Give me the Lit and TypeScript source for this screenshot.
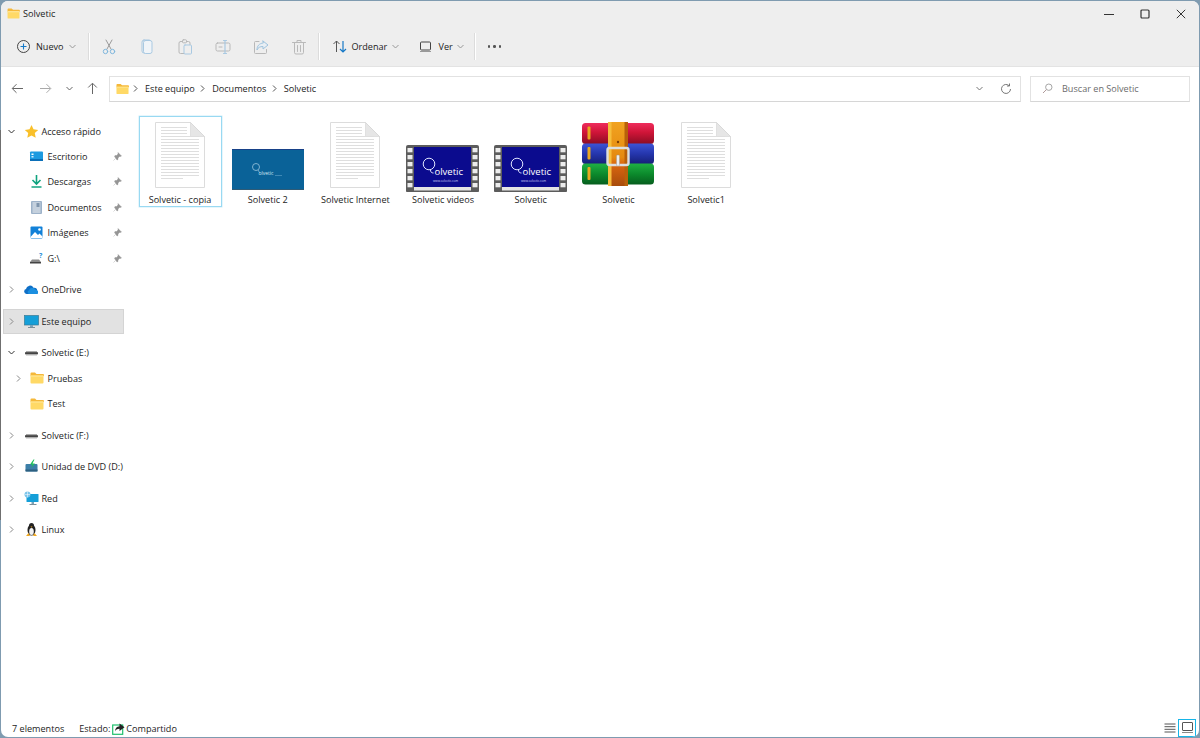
import { LitElement, html, css, svg } from "lit";
import { customElement } from "lit/decorators.js";

const chev = (d: "r" | "d", c = "#777") => html`<svg class="chev" width="9" height="9" viewBox="0 0 9 9"><path d="${d === "r" ? "M3 1.500l3 3-3 3" : "M1.500 3l3 3 3-3"}" fill="none" stroke="${c}" stroke-width="1"/></svg>`;

const folder = (w = 14, h = 12) => html`<svg width="${w}" height="${h}" viewBox="0 0 14 12"><path d="M0.5 1.5a1 1 0 0 1 1-1h3.5l1.5 1.5h6.500a1 1 0 0 1 1 1v1H.5z" fill="#f5b83a"/><path d="M.5 3.500h13v7a1 1 0 0 1-1 1h-11a1 1 0 0 1-1-1z" fill="#ffd966"/><path d="M.5 3.500h13v1h-13z" fill="#ffe9a0"/></svg>`;

const side = (p: unknown) => html`<svg width="15" height="15" viewBox="0 0 15 15">${p}</svg>`;
const drive = side(svg`<rect x="1" y="7" width="13" height="2.500" rx="1" fill="#444"/><rect x="2" y="6" width="11" height="1.200" fill="#aaa"/><rect x="2" y="9.500" width="11" height="1" fill="#bbb"/>`);
const icons: Record<string, unknown> = {
  star: side(svg`<path d="M7.500 1l2 4.300 4.700.6-3.400 3.200.9 4.600-4.200-2.300-4.200 2.300.9-4.600L.8 5.900l4.700-.6z" fill="#f9c02b"/>`),
  desk: side(svg`<rect x="1" y="2.500" width="13" height="9.500" rx="1" fill="#1d9ae0"/><rect x="1" y="10" width="13" height="2" fill="#0b6fb8"/><rect x="2.500" y="4.500" width="2" height="1.500" fill="#fff"/><rect x="2.500" y="7" width="2" height="1.500" fill="#cfeaff"/>`),
  down: side(svg`<path d="M7.500 1v8M3.500 6l4 4 4-4" fill="none" stroke="#10a37f" stroke-width="1.600"/><path d="M2.500 13h10" stroke="#10a37f" stroke-width="1.400"/>`),
  docs: side(svg`<rect x="2" y="1" width="11" height="13" rx="1" fill="#9db2c9"/><rect x="3.500" y="2" width="8" height="11" fill="#c4d0dd"/><rect x="7.500" y="3" width="3" height="4" fill="#7f95ad"/>`),
  pics: side(svg`<rect x="1.500" y="1.500" width="12" height="12" rx="1" fill="#1281d8"/><path d="M1.500 12l4.500-5 3 3 1.500-1.500 3 3v1.500h-12z" fill="#fff"/><circle cx="10.500" cy="4.500" r="1.300" fill="#fff"/>`),
  g: side(svg`<path d="M1 11l2-2.500h7l2 2.500z" fill="#8a8a8a"/><rect x="1" y="11" width="11" height="1.500" fill="#444"/><text x="10" y="7" font-size="7" font-family="Open Sans" font-weight="700" fill="#2a8fd8">?</text>`),
  cloud: side(svg`<path d="M2.500 12a2.500 2.500 0 0 1-.5-4.900 4 4 0 0 1 7.500-1.400 3.300 3.300 0 0 1 3.800 3A2 2 0 0 1 13 12z" fill="#0f6fc6"/><path d="M5 12a2 2 0 0 1 0-3.800 3.500 3.500 0 0 1 6.500-.5 2.500 2.500 0 0 1 1.800 4.300z" fill="#1b8fe0"/>`),
  pc: side(svg`<rect x="0.500" y="1.500" width="14" height="9.500" rx=".5" fill="#159fd8"/><rect x="0.500" y="1.500" width="14" height="9.500" fill="none" stroke="#3a7a94" stroke-width=".7"/><rect x="6" y="11" width="3" height="2" fill="#7ba3b8"/><rect x="4" y="13" width="7" height="1" fill="#7d8f99"/>`),
  dvd: side(svg`<rect x="1.500" y="5" width="12" height="7.500" rx="1" fill="#3d7fa8"/><rect x="1.500" y="10.500" width="12" height="2" fill="#2d5f80"/><path d="M9.500 .5L6 5.500h2.500L7 9l4-4.500H8.500L10.500 .5z" fill="#1fc25a"/>`),
  net: side(svg`<rect x="2.500" y="3" width="12" height="8" rx=".5" fill="#159fd8"/><rect x="7.500" y="11" width="2.500" height="2" fill="#7ba3b8"/><rect x="5.500" y="13" width="7" height="1" fill="#7d8f99"/><circle cx="3.500" cy="3.500" r="3" fill="#7cc4ea"/><path d="M1 3.500h5M3.500 .5v6" stroke="#fff" stroke-width=".5"/>`),
  linux: side(svg`<ellipse cx="7.500" cy="8" rx="4" ry="5.500" fill="#222"/><circle cx="7.500" cy="3.500" r="2.500" fill="#222"/><ellipse cx="7.500" cy="9.500" rx="2.300" ry="3.500" fill="#f2f2f2"/><path d="M6.500 4.500h2l-1 1.200z" fill="#f0a820"/><path d="M2 14l2.500-3 1.500 3zM13 14l-2.500-3L9 14z" fill="#f0a820"/>`),
  folder: folder(14, 12),
};

const pin = html`<svg class="pin" width="9" height="9" viewBox="0 0 9 9"><path d="M5 .5l3.500 3.500-1 .5-1 0-1.500 1.500 0 1.500-1 .5L1.500 4.500l.5-1 1.500 0L5 2l0-1z M2.500 6.500L.5 8.500" fill="#959595" stroke="#959595" stroke-width=".4"/></svg>`;

interface Row { t: string; ic: string; arrow?: "r" | "d"; lvl: 0 | 1; pin?: boolean; gap?: boolean; sel?: boolean }
const rows: Row[] = [
  { t: "Acceso rápido", ic: "star", arrow: "d", lvl: 0 },
  { t: "Escritorio", ic: "desk", lvl: 1, pin: true },
  { t: "Descargas", ic: "down", lvl: 1, pin: true },
  { t: "Documentos", ic: "docs", lvl: 1, pin: true },
  { t: "Imágenes", ic: "pics", lvl: 1, pin: true },
  { t: "G:\\", ic: "g", lvl: 1, pin: true },
  { t: "OneDrive", ic: "cloud", arrow: "r", lvl: 0, gap: true },
  { t: "Este equipo", ic: "pc", arrow: "r", lvl: 0, gap: true, sel: true },
  { t: "Solvetic (E:)", ic: "drive", arrow: "d", lvl: 0, gap: true },
  { t: "Pruebas", ic: "folder", arrow: "r", lvl: 1 },
  { t: "Test", ic: "folder", lvl: 1 },
  { t: "Solvetic (F:)", ic: "drive", arrow: "r", lvl: 0, gap: true },
  { t: "Unidad de DVD (D:)", ic: "dvd", arrow: "r", lvl: 0, gap: true },
  { t: "Red", ic: "net", arrow: "r", lvl: 0, gap: true },
  { t: "Linux", ic: "linux", arrow: "r", lvl: 0, gap: true },
];
icons.drive = drive;

const docLines = Array.from({ length: 18 }, (_, i) => svg`<rect x="6" y="${5 + i * 3}" width="${i < 3 ? 26 : i === 17 ? 22 : 38}" height="1" fill="#dedede"/>`);
const docIcon = html`<svg class="big" width="72" height="72" viewBox="-11 -2 72 72"><path d="M.5 .5h35l14 14v51H.5z" fill="#fff" stroke="#dcdcdc"/><path d="M35.500 .5l14 14h-14z" fill="#e6e6e6" stroke="#d4d4d4" stroke-width=".6"/>${docLines}</svg>`;

const picIcon = html`<svg class="big" width="72" height="72" viewBox="0 0 72 72"><rect x="0" y="29" width="72" height="41" fill="#0a6298"/><rect x="0" y="29" width="72" height=".8" fill="#1b3a85"/><rect x="0" y="69.500" width="72" height=".5" fill="#555"/><circle cx="24" cy="47" r="3.500" fill="none" stroke="#9cc6de" stroke-width=".8"/><path d="M26 50l1.500 2.500" stroke="#9cc6de" stroke-width=".7"/><text x="26.500" y="55" font-size="5" font-family="Open Sans" fill="#d4e8f3">olvetic</text><path d="M43 55.500h7" stroke="#4d93bd" stroke-width=".8"/></svg>`;

const holes = [0, 1, 2, 3, 4, 5];
const videoIcon = html`<svg class="big" width="74" height="72" viewBox="0 0 74 72">
  <rect x="0" y="25" width="73" height="47.500" rx="2" fill="#5c5c5c"/>
  ${holes.map((i) => svg`<rect x="1.500" y="${28 + i * 7}" width="5" height="4.300" fill="#ececec"/><rect x="66.500" y="${28 + i * 7}" width="5" height="4.300" fill="#ececec"/>`)}
  <rect x="8" y="27" width="57" height="40" fill="#0b0b8e"/>
  <rect x="8" y="67" width="57" height="3.500" fill="#e4e4e4"/>
  <circle cx="23" cy="44" r="5.800" fill="none" stroke="#dfe4ff" stroke-width="1"/>
  <path d="M24.500 50c0 2 1 3 3 3" fill="none" stroke="#dfe4ff" stroke-width="1"/>
  <text x="28.500" y="55" font-size="9.500" font-family="Open Sans" fill="#fff">olvetic</text>
  <text x="27" y="61.500" font-size="3" font-family="Open Sans" fill="#cfd0f5">www.solvetic.com</text>
</svg>`;

const book = (y: number, h: number, g: string) => svg`
  <rect x="0" y="${y}" width="72" height="${h}" rx="3.500" fill="url(#${g})"/>
  <rect x="5.500" y="${y + 3.500}" width="3" height="${h - 8}" rx="1" fill="#e9a820"/>`;
const rarIcon = html`<svg class="big" width="72" height="72" viewBox="0 0 72 72">
  <defs>
    <linearGradient id="gr" x1="0" y1="0" x2="0" y2="1"><stop offset="0" stop-color="#ef2c5c"/><stop offset=".45" stop-color="#cf1538"/><stop offset="1" stop-color="#8c0d24"/></linearGradient>
    <linearGradient id="gb" x1="0" y1="0" x2="0" y2="1"><stop offset="0" stop-color="#3d54d6"/><stop offset=".5" stop-color="#2536ad"/><stop offset="1" stop-color="#161f78"/></linearGradient>
    <linearGradient id="gg" x1="0" y1="0" x2="0" y2="1"><stop offset="0" stop-color="#1fb044"/><stop offset=".5" stop-color="#0c8a2c"/><stop offset="1" stop-color="#065e1e"/></linearGradient>
    <linearGradient id="gt" x1="0" y1="0" x2="0" y2="1"><stop offset="0" stop-color="#f1a320"/><stop offset=".55" stop-color="#e58a10"/><stop offset=".66" stop-color="#d9660f"/><stop offset="1" stop-color="#a84c0c"/></linearGradient>
  </defs>
  ${book(3, 21, "gr")}
  ${book(23.500, 20.500, "gb")}
  ${book(43.500, 21, "gg")}
  <path d="M26 2h20v64H26z" fill="url(#gt)"/>
  <path d="M26 2h3.500v64H26z" fill="#f6bd3c"/>
  <path d="M42.500 2H46v64h-3.500z" fill="#b8610a"/>
  <rect x="25.500" y="28" width="21" height="17" rx="2" fill="none" stroke="#dcdedf" stroke-width="2.400"/>
  <rect x="34.500" y="35" width="3" height="11" rx="1" fill="#eceded" stroke="#8d8d8d" stroke-width=".4"/>
  <circle cx="36" cy="22" r="1.200" fill="#7a3c05"/>
</svg>`;

const files = [
  { t: "Solvetic - copia", i: docIcon, sel: true },
  { t: "Solvetic 2", i: picIcon },
  { t: "Solvetic Internet", i: docIcon },
  { t: "Solvetic videos", i: videoIcon },
  { t: "Solvetic", i: videoIcon },
  { t: "Solvetic", i: rarIcon },
  { t: "Solvetic1", i: docIcon },
];

const tb = (p: unknown) => html`<svg width="18" height="18" viewBox="0 0 18 18" fill="none" stroke-linecap="round" stroke-linejoin="round">${p}</svg>`;
const tools = [
  tb(svg`<path d="M6 2l5 9M12 2L7 11" stroke="#9a9a9a"/><circle cx="5.500" cy="13.500" r="2.200" stroke="#7fb6dc"/><circle cx="12.500" cy="13.500" r="2.200" stroke="#7fb6dc"/>`),
  tb(svg`<rect x="4" y="2" width="9" height="13" rx="2" stroke="#a9c9e2"/><rect x="5.500" y="2.500" width="8.500" height="13" rx="2" stroke="#a9c9e2" fill="#f0f4f8"/>`),
  tb(svg`<rect x="3" y="3.500" width="11" height="12" rx="1.500" stroke="#b8b8b8"/><rect x="6.500" y="1.800" width="4" height="3" rx=".8" stroke="#b8b8b8" fill="#eee"/><rect x="8" y="7" width="7.500" height="9" rx="1" stroke="#a9c9e2" fill="#eee"/>`),
  tb(svg`<rect x="2" y="5" width="14" height="8" rx="1.500" stroke="#b8b8b8"/><path d="M5 9h3" stroke="#b8b8b8"/><path d="M11 2.500v13M9.500 2.500h3M9.500 15.500h3" stroke="#a9c9e2" stroke-width="1.200"/>`),
  tb(svg`<path d="M7 3.500H3.500a1 1 0 0 0-1 1v10a1 1 0 0 0 1 1h10a1 1 0 0 0 1-1v-3" stroke="#b8b8b8"/><path d="M11 3l5 4-5 4V8.500c-3 0-5 1-6 3.500 0-4 2-6.500 6-7z" stroke="#9fc3de" fill="#e9eff4"/>`),
  tb(svg`<path d="M4.500 4.500v10a1.500 1.500 0 0 0 1.500 1.500h6a1.500 1.500 0 0 0 1.500-1.500v-10M2.500 4.500h13M7 4.500V2.500h4v2M7.500 7.500v6M10.500 7.500v6" stroke="#b9b9b9"/>`),
];

@customElement("app-root")
export class AppRoot extends LitElement {
  static styles = css`
    :host { display: block; width: 1200px; height: 738px; background: linear-gradient(#6f6f6f, #6f6f6f) 0 130px / 1px 390px no-repeat, #7f9bb0; font-family: "Open Sans", "Noto Sans", sans-serif; font-size: 9.100px; color: #1c1c1c; overflow: hidden; }
    .win { box-sizing: border-box; margin: 1px; height: 736px; background: #fff; border-radius: 7px; display: flex; flex-direction: column; overflow: hidden; }
    .top { background: #eeeeee; height: 65px; border-bottom: 1px solid #e3e3e3; flex: none; display: flex; flex-direction: column; }
    .title { height: 25px; display: flex; align-items: center; padding-left: 6px; gap: 3px; flex: none; }
    .wc { margin-left: auto; display: flex; }
    .wc span { width: 36px; display: flex; justify-content: center; }
    .cmd { display: flex; align-items: center; height: 33px; margin-top: 4px; flex: none; }
    .tbtn { display: flex; align-items: center; flex: none; }
    .nuevo { margin-left: 15px; width: 72px; }
    .nuevo .lbl { margin-left: 5px; margin-right: 4px; }
    .sep { width: 1px; height: 27px; background: #dcdcdc; box-shadow: 1px 0 0 #fff; flex: none; }
    .s1 { margin-right: 1px; }
    .slot { width: 38px; display: flex; justify-content: center; flex: none; }
    .ord { margin-left: 13px; width: 84px; }
    .ord .lbl { margin: 0 4px 0 3.500px; }
    .ver { width: 55px; margin-left: 3px; }
    .ver .lbl { margin: 0 3px 0 6.500px; }
    .dots { margin-left: 13px; display: flex; gap: 3px; }
    .dots i { width: 2.400px; height: 2.400px; background: #555; border-radius: 50%; display: block; }
    .nav { height: 43px; display: flex; align-items: center; flex: none; }
    .nb { display: flex; justify-content: center; flex: none; }
    .n1 { width: 15px; margin-left: 8.500px; }
    .n2 { width: 15px; margin-left: 13px; }
    .n3 { width: 9px; margin-left: 12px; }
    .n4 { width: 14px; margin-left: 11.500px; }
    .addr { margin-left: 10px; width: 912px; height: 26px; box-sizing: border-box; border: 1px solid #e2e2e2; border-bottom-color: #d6d6d6; display: flex; align-items: center; padding-left: 6px; flex: none; }
    .addr .bc { margin: 0 5px 0 3.500px; display: flex; }
    .addr .bc.first { margin: 0 5.500px 0 1.500px; }
    .addr .cr { margin-left: auto; display: flex; align-items: center; gap: 16px; padding-right: 8px; }
    .search { margin-left: 9px; width: 160px; height: 26px; box-sizing: border-box; border: 1px solid #e2e2e2; border-bottom-color: #d6d6d6; display: flex; align-items: center; padding-left: 11px; gap: 9px; color: #6b6b6b; flex: none; }
    .body { flex: 1; display: flex; min-height: 0; padding-top: 6px; }
    .tree { width: 131px; flex: none; padding: 2.500px 0 0 2px; display: flex; flex-direction: column; box-sizing: border-box; }
    .row { height: 25.400px; display: flex; align-items: center; flex: none; width: 121px; box-sizing: border-box; white-space: nowrap; }
    .row.gap { margin-top: 6.200px; }
    .row.sel { background: #e2e2e2; box-shadow: inset 0 0 0 1px #d4d4d4; }
    .arrow { width: 9px; margin-left: 4px; display: flex; flex: none; justify-content: center; }
    .icon { width: 15px; height: 15px; display: flex; align-items: center; justify-content: center; margin-left: 8px; margin-right: 2.500px; flex: none; }
    .row.l1 .icon { margin-left: 6px; margin-right: 3.500px; }
    .sp-l1 { width: 7px; flex: none; }
    .row .pin { margin-left: auto; margin-right: 2px; }
    .grid { flex: 1; display: flex; padding-left: 6.500px; gap: 4.700px; align-items: flex-start; }
    .tile { width: 83px; height: 91px; box-sizing: border-box; border: 1px solid transparent; display: flex; flex-direction: column; align-items: center; flex: none; padding-top: 3px; }
    .tile.sel { border-color: #99d9f2; box-shadow: 0 0 0 .5px #cdeefa; }
    .tile .big { display: block; flex: none; }
    .tile .name { margin-top: 1px; white-space: nowrap; }
    .status { height: 19px; box-sizing: border-box; padding: 2px 0 0 11px; flex: none; display: flex; align-items: center; white-space: nowrap; margin-top: -1px; }
    .status .st { margin-left: 15px; display: flex; align-items: center; }
    .status .st svg { margin: 0 1px 0 2px; }
    .views { margin-left: auto; display: flex; align-items: center; padding-right: 3px; gap: 2px; margin-top: -2px; }
    .tilebtn { width: 18px; height: 18px; box-sizing: border-box; border: 1.500px solid #16b5e8; display: flex; align-items: center; justify-content: center; }
  `;

  render() {
    return html`<div class="win">
      <div class="top">
        <div class="title">
          ${folder(13, 11)}<span>Solvetic</span>
          <div class="wc">
            <span><svg width="10" height="10" viewBox="0 0 10 10"><path d="M0 5.500h10" stroke="#333" stroke-width="1"/></svg></span>
            <span><svg width="10" height="10" viewBox="0 0 10 10"><rect x="1" y="1" width="8" height="8" rx="1" fill="none" stroke="#333" stroke-width="1.200"/></svg></span>
            <span><svg width="10" height="10" viewBox="0 0 10 10"><path d="M.8 .8l8.400 8.400M9.200 .8L.8 9.200" stroke="#333" stroke-width="1"/></svg></span>
          </div>
        </div>
        <div class="cmd">
          <div class="tbtn nuevo">
            <svg width="15" height="15" viewBox="0 0 15 15"><circle cx="7.500" cy="7.500" r="6" fill="none" stroke="#444"/><path d="M7.500 4.500v6M4.500 7.500h6" stroke="#1679c7" stroke-width="1.100"/></svg>
            <span class="lbl">Nuevo</span>${chev("d", "#999")}
          </div>
          <div class="sep s1"></div>
          ${tools.map((t) => html`<div class="slot">${t}</div>`)}
          <div class="sep"></div>
          <div class="tbtn ord">
            <svg width="16" height="15" viewBox="0 0 16 15" fill="none"><path d="M4.500 13V2M1.500 5l3-3 3 3" stroke="#555"/><path d="M11 2v11M8 10l3 3 3-3" stroke="#1679c7" stroke-width="1.200"/></svg>
            <span class="lbl">Ordenar</span>${chev("d", "#999")}
          </div>
          <div class="tbtn ver">
            <svg width="13" height="13" viewBox="0 0 13 13" fill="none"><rect x="1.500" y="2" width="10" height="8" rx="1" stroke="#444"/><path d="M1 11.500h11" stroke="#999"/></svg>
            <span class="lbl">Ver</span>${chev("d", "#999")}
          </div>
          <div class="sep"></div>
          <div class="dots"><i></i><i></i><i></i></div>
        </div>
      </div>
      <div class="nav">
        <div class="nb n1"><svg width="13" height="11" viewBox="0 0 13 11" fill="none"><path d="M12 5.500H1.500M5.500 1.200L1.200 5.500l4.300 4.300" stroke="#666"/></svg></div>
        <div class="nb n2"><svg width="13" height="11" viewBox="0 0 13 11" fill="none"><path d="M1 5.500h10.500M7.500 1.200l4.300 4.300-4.300 4.300" stroke="#aaa"/></svg></div>
        <div class="nb n3">${chev("d", "#666")}</div>
        <div class="nb n4"><svg width="11" height="13" viewBox="0 0 11 13" fill="none"><path d="M5.500 12V1.500M1.200 5.500l4.300-4.300 4.300 4.300" stroke="#666"/></svg></div>
        <div class="addr">
          ${folder(13, 12)}
          <span class="bc first">${chev("r", "#555")}</span><span>Este equipo</span>
          <span class="bc">${chev("r", "#555")}</span><span>Documentos</span>
          <span class="bc">${chev("r", "#555")}</span><span>Solvetic</span>
          <div class="cr">
            ${chev("d", "#777")}
            <svg width="12" height="12" viewBox="0 0 12 12" fill="none"><path d="M10.500 6a4.500 4.500 0 1 1-1.400-3.300" stroke="#777"/><path d="M9.500 .5v2.500H7" stroke="#777"/></svg>
          </div>
        </div>
        <div class="search">
          <svg width="11" height="11" viewBox="0 0 11 11" fill="none"><circle cx="6.800" cy="4.200" r="3.200" stroke="#a5a5a5"/><path d="M4.500 6.500L1 10" stroke="#b09a9a"/></svg>
          <span>Buscar en Solvetic</span>
        </div>
      </div>
      <div class="body">
        <div class="tree">
          ${rows.map((r) => html`<div class="row l${r.lvl} ${r.gap ? "gap" : ""} ${r.sel ? "sel" : ""}">
            ${r.lvl === 1 ? html`<span class="sp-l1"></span>` : ""}
            <span class="arrow">${r.arrow ? chev(r.arrow, r.arrow === "d" ? "#333" : "#888") : ""}</span>
            <span class="icon">${icons[r.ic]}</span>
            <span>${r.t}</span>
            ${r.pin ? pin : ""}
          </div>`)}
        </div>
        <div class="grid">
          ${files.map((f) => html`<div class="tile ${f.sel ? "sel" : ""}">${f.i}<span class="name">${f.t}</span></div>`)}
        </div>
      </div>
      <div class="status">
        <span>7 elementos</span>
        <span class="st">Estado:
          <svg width="13" height="12" viewBox="0 0 13 12" fill="none"><rect x=".7" y="2" width="10" height="9.300" stroke="#1fbf6c" stroke-width="1.200"/><path d="M7.500 .5l5 3.700-5 3.800V5.700c-2.500 0-3.700.8-4.500 2.800 0-3 1.700-5 4.500-5.200z" fill="#222"/></svg>
          Compartido</span>
        <div class="views">
          <svg width="12" height="10" viewBox="0 0 12 10"><path d="M.5 1h11M.5 3.700h11M.5 6.300h11M.5 9h11" stroke="#555" stroke-width="1"/></svg>
          <div class="tilebtn"><svg width="11" height="11" viewBox="0 0 11 11" fill="none"><rect x=".5" y=".5" width="10" height="8" rx=".5" stroke="#555"/><path d="M0 10.500h11" stroke="#888"/></svg></div>
        </div>
      </div>
    </div>`;
  }
}
